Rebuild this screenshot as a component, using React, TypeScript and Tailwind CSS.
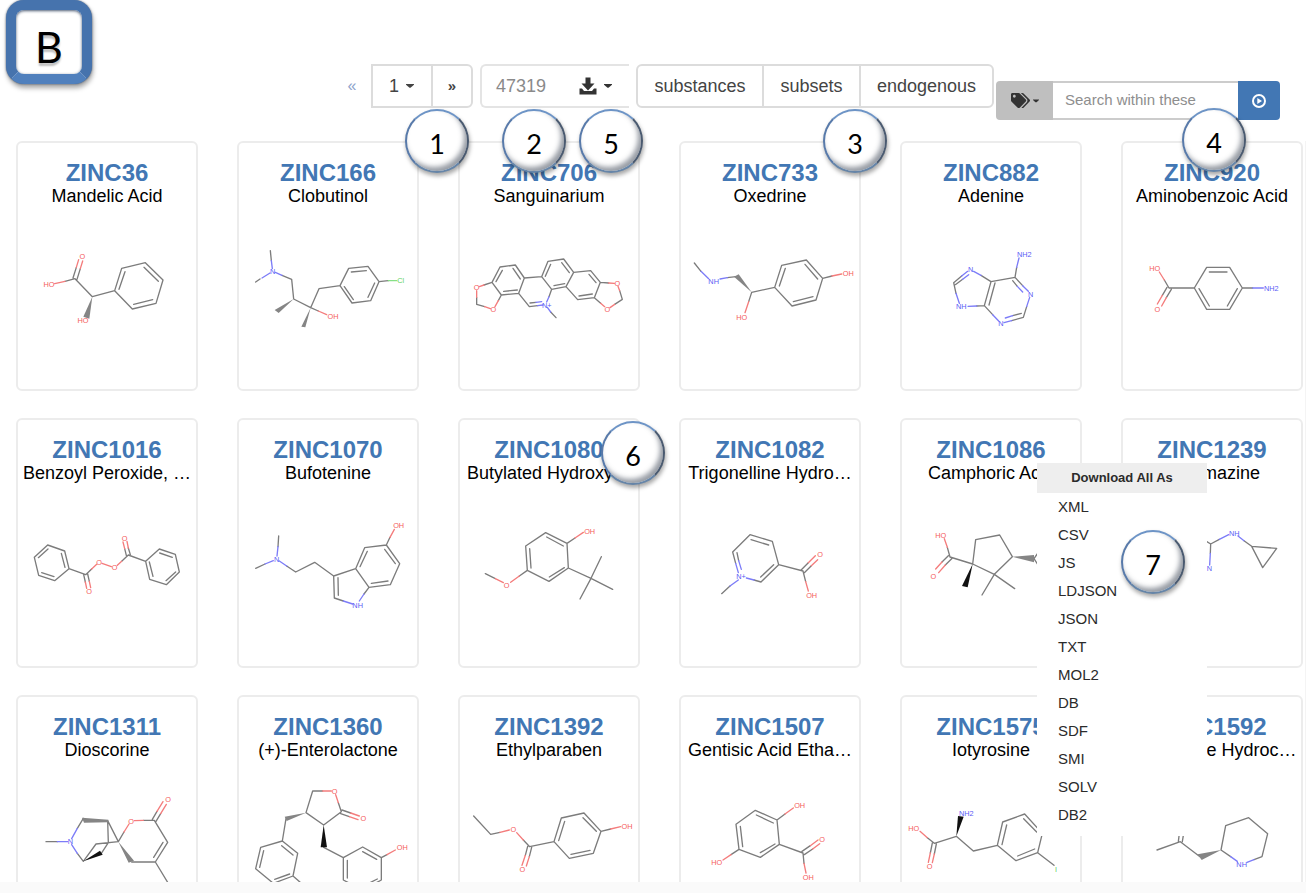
import type { ReactNode } from "react";
import { FaTags } from "react-icons/fa";

type Atom = [x: number, y: number, text: string, tone: "r" | "b" | "g"];

interface Molecule {
  origin: [number, number];
  carbon: string;
  oxygen?: string;
  nitrogen?: string;
  chlorine?: string;
  hashed?: string;
  wedge?: string;
  atoms: Atom[];
}

interface Compound {
  id: string;
  name: string;
  molecule: Molecule;
}

const toneFill = { r: "#f45b5b", b: "#5a5af5", g: "#5fd35f" };

const compounds: Compound[] = [
  {
    id: "ZINC36",
    name: "Mandelic Acid",
    molecule: {
      origin: [51, 6],
      carbon:
        "M195 154L225 146L277 200L344 182M344 182L365 115L436 98L489 150L468 220L397 237ZM357 178L375 125M432 112L475 154M458 209L401 223M219 144L229 112M231 148L241 116",
      oxygen: "M164 161L195 154M229 112L236 89M241 116L248 93",
      hashed: "M277 200L268 266L250 260Z",
      atoms: [[247, 80, "O", "r"], [147, 164, "HO", "r"], [249, 272, "HO", "r"]],
    },
  },
  {
    id: "ZINC166",
    name: "Clobutinol",
    molecule: {
      origin: [714, 6],
      carbon:
        "M811 62L814 92M780 147L767 156M846 136L875 148L881 207L932 233L957 176L1020 167M1020 167L1046 115L1104 109L1137 155L1112 212L1056 219ZM1054 126L1099 122M1124 159L1104 202M1033 170L1060 209M1137 155L1165 152M932 233L955 243",
      oxygen: "M955 243L980 254",
      nitrogen: "M814 92L817 116M810 129L786 144M826 127L846 136",
      chlorine: "M1165 152L1190 152",
      hashed: "M881 207L824 240L836 249ZM932 233L904 290L916 292Z",
      atoms: [[818, 124, "N", "b"], [999, 259, "OH", "r"], [1202, 152, "Cl", "g"]],
    },
  },
  {
    id: "ZINC706",
    name: "Sanguinarium",
    molecule: {
      origin: [57, 6],
      carbon:
        "M156 157L180 111L226 105L253 144L236 190L184 195ZM253 144L305 140L335 178L327 200M293 227L268 230L236 190M305 140L324 94L371 87L401 127L378 170L335 178M401 127L452 122L481 157L463 203L413 209L378 170M168 155L187 121M219 115L241 147M191 184L232 180M316 139L332 103M365 98L388 128M342 167L374 161M447 133L468 158M417 198L457 192M156 157L132 165M110 202L110 223L134 230M184 195L175 212M481 157L506 159M539 182L547 208L524 223M463 203L482 220M270 219L288 217M332 246L348 263",
      oxygen:
        "M132 165L118 170M110 182L110 202M134 230L151 236M175 212L165 230M506 159L523 160M534 169L539 182M524 223L510 233M482 220L494 230",
      nitrogen: "M327 200L320 216M309 225L293 227M288 217L305 215M322 232L332 246",
      atoms: [
        [110, 173, "O", "r"], [160, 239, "O", "r"], [532, 160, "O", "r"],
        [502, 238, "O", "r"], [320, 225, "N+", "b"],
      ],
    },
  },
  {
    id: "ZINC733",
    name: "Oxedrine",
    molecule: {
      origin: [720, 6],
      carbon:
        "M763 99L783 124M862 143L888 140M935 187L1004 172M1004 172L1025 106L1099 90L1148 145L1128 210L1056 228ZM1018 168L1036 115M1095 103L1133 147M1119 200L1060 215M1148 145L1176 138M935 187L926 215",
      oxygen: "M1176 138L1205 132M926 215L915 248",
      nitrogen: "M783 124L806 146M840 147L862 143",
      hashed: "M935 187L882 140L896 133Z",
      atoms: [[821, 153, "NH", "b"], [1225, 131, "OH", "r"], [905, 262, "HO", "r"]],
    },
  },
  {
    id: "ZINC882",
    name: "Adenine",
    molecule: {
      origin: [63, 6],
      carbon:
        "M303 136L333 155L313 227L290 228M345 159L327 225M333 155L405 142L410 112M245 138L221 158L228 190M248 148L226 164M405 142L428 167M398 152L412 169M440 230L430 262L395 272M424 250L398 257M313 227L338 254",
      nitrogen:
        "M281 124L303 136M263 124L245 138M266 134L248 148M228 190L238 220M264 229L290 228M410 112L417 84M428 167L445 184M412 169L428 186M449 202L440 230M395 272L372 278M398 257L376 264M338 254L356 273",
      atoms: [
        [272, 118, "N", "b"], [244, 230, "NH", "b"], [433, 72, "NH2", "b"],
        [452, 192, "N", "b"], [363, 281, "N", "b"],
      ],
    },
  },
  {
    id: "ZINC920",
    name: "Aminobenzoic Acid",
    molecule: {
      origin: [726, 6],
      carbon:
        "M853 150L867 174L943 174M943 174L980 112L1049 112L1087 174L1049 238L980 238ZM988 126L1041 126M1072 176L1042 228M957 176L988 228M1087 174L1118 174M861 172L847 196M874 178L859 203",
      oxygen: "M838 126L853 150M847 196L832 222M859 203L845 228",
      nitrogen: "M1118 174L1150 174",
      atoms: [[824, 114, "HO", "r"], [832, 238, "O", "r"], [1174, 174, "NH2", "b"]],
    },
  },
  {
    id: "ZINC1016",
    name: "Benzoyl Peroxide, …",
    molecule: {
      origin: [51, 27],
      carbon:
        "M103 172L143 135L194 153L207 206L164 242L116 226ZM115 173L144 147M184 160L195 202M162 230L125 218M207 206L257 224L275 207M251 224L256 246M263 222L268 244M365 184L385 165L437 184M379 166L374 146M391 164L385 144M437 184L478 147L526 163L538 216L499 254L449 238ZM479 159L517 172M527 216L498 242M448 186L459 229",
      oxygen:
        "M275 207L290 193M306 190L334 200M352 196L365 184M256 246L260 265M268 244L272 263M374 146L369 126M385 144L381 124",
      atoms: [
        [297, 187, "O", "r"], [344, 203, "O", "r"], [267, 275, "O", "r"], [374, 116, "O", "r"],
      ],
    },
  },
  {
    id: "ZINC1070",
    name: "Bufotenine",
    molecule: {
      origin: [714, 27],
      carbon:
        "M836 108L834 140M767 205L795 192M860 198L887 216L944 187L1001 228L1067 206L1107 262L1092 282M1001 228L1003 294L1030 303M1014 233L1015 286M1067 206L1094 143L1159 135L1199 191L1171 254L1107 262M1080 200L1102 154M1154 148L1186 191M1114 250L1164 243M1159 135L1170 112",
      oxygen: "M1170 112L1183 88",
      nitrogen: "M834 140L831 168M795 192L820 182M838 183L860 198M1092 282L1078 303M1030 303L1058 312",
      atoms: [[830, 178, "N", "b"], [1073, 315, "NH", "b"], [1196, 76, "OH", "r"]],
    },
  },
  {
    id: "ZINC1080",
    name: "Butylated Hydroxy…",
    molecule: {
      origin: [57, 27],
      carbon:
        "M257 138L317 98L381 130L385 204L327 244L262 211ZM269 146L273 204M320 111L370 138M373 203L328 231M381 130L405 114M262 211L238 228M166 236L136 221M385 204L453 235L484 170M518 268L453 235L420 297",
      oxygen: "M405 114L430 97M238 228L212 247M190 248L166 236",
      atoms: [[449, 93, "OH", "r"], [200, 255, "O", "r"]],
    },
  },
  {
    id: "ZINC1082",
    name: "Trigonelline Hydro…",
    molecule: {
      origin: [720, 27],
      carbon:
        "M887 190L878 156L930 104L997 124L1016 194L963 246L942 240M933 119L986 135M1001 194L962 231M891 158L896 182M870 258L845 281M1016 194L1089 213L1097 245M1084 209L1105 188M1093 218L1114 197",
      oxygen: "M1105 188L1126 167M1114 197L1133 179M1097 245L1105 273",
      nitrogen: "M887 190L895 218M896 182L904 208M895 240L870 258M919 234L942 240",
      atoms: [[903, 230, "N+", "b"], [1140, 162, "O", "r"], [1115, 285, "OH", "r"]],
    },
  },
  {
    id: "ZINC1086",
    name: "Camphoric Acid",
    molecule: {
      origin: [63, 297],
      carbon:
        "M202 412L210 441L278 462L287 389L359 375L397 440L343 493L278 462M343 493L306 555M343 493L404 536M205 437L186 456M215 446L196 465M480 420L462 446L480 474",
      oxygen: "M193 386L202 412M186 456L167 477M196 465L176 488",
      hashed: "M397 440L462 435L462 457Z",
      wedge: "M278 462L246 528L263 532Z",
      atoms: [[182, 377, "HO", "r"], [160, 500, "O", "r"]],
    },
  },
  {
    id: "ZINC1239",
    name: "Cyromazine",
    molecule: {
      origin: [726, 297],
      carbon: "M970 388L992 402L991 430M992 402L1018 388M1092 392L1115 409M1115 409L1190 415L1148 473Z",
      nitrogen: "M991 430L989 465M1018 388L1046 374M1074 378L1092 392",
      atoms: [[988, 475, "N", "b"], [1063, 371, "NH", "b"]],
    },
  },
  {
    id: "ZINC1311",
    name: "Dioscorine",
    molecule: {
      origin: [51, 288],
      carbon:
        "M138 455L172 455M232 415L250 385M323 392L355 455L288 462L250 514L232 490M323 392L325 458L304 490M355 455L372 426M430 391L463 391L503 457L466 516L395 516M489 457L461 502M466 516L503 577L520 606M457 388L471 364M468 394L482 371",
      oxygen: "M372 426L387 402M403 392L430 391M471 364L489 335M482 371L499 343",
      nitrogen: "M172 455L203 455M215 446L232 415M215 464L232 490",
      hashed: "M246 383L325 389L325 397L252 398ZM355 455L386 518L402 512Z",
      wedge: "M250 514L300 482L308 494Z",
      atoms: [[211, 455, "N", "b"], [393, 393, "O", "r"], [504, 327, "O", "r"]],
    },
  },
  {
    id: "ZINC1360",
    name: "(+)-Enterolactone",
    molecule: {
      origin: [714, 288],
      carbon:
        "M968 303L938 303L918 368L971 405L1024 365L1015 338M1026 360L1052 369M1022 371L1048 380M858 386L847 453L893 490L879 558L820 580L767 536L782 472L847 453M879 558L902 578M845 467L879 495M869 552L824 568M779 532L791 482M971 472L1030 503L1088 471L1144 503L1144 570L1088 600L1030 570L1030 503M1042 511L1042 564M1088 485L1130 508M1132 567L1090 588M1144 503L1161 494",
      oxygen: "M968 303L994 303M1007 314L1015 338M1052 369L1078 378M1048 380L1074 389M1161 494L1186 480",
      hashed: "M918 368L854 380L860 393Z",
      wedge: "M971 405L962 472L981 472Z",
      atoms: [[1004, 303, "O", "r"], [1090, 386, "O", "r"], [1207, 473, "OH", "r"]],
    },
  },
  {
    id: "ZINC1392",
    name: "Ethylparaben",
    molecule: {
      origin: [57, 288],
      carbon:
        "M101 378L152 433L180 427M250 450L269 470L342 455M342 455L364 384L432 369L483 424L460 490L388 505ZM356 452L374 394M429 383L469 424M450 481L393 493M263 469L256 496M275 472L268 500M483 424L512 417",
      oxygen: "M180 427L208 420M230 428L250 450M256 496L246 526M268 500L259 528M512 417L542 410",
      atoms: [[220, 417, "O", "r"], [247, 539, "O", "r"], [561, 408, "OH", "r"]],
    },
  },
  {
    id: "ZINC1507",
    name: "Gentisic Acid Etha…",
    molecule: {
      origin: [720, 288],
      carbon:
        "M888 403L946 361L1011 390L1018 463L961 502L897 478ZM901 409L908 470M949 375L1000 399M1005 462L961 488M1011 390L1035 372M897 478L873 494M1018 463L1089 489L1092 520M1086 484L1111 467M1093 494L1118 477",
      oxygen: "M1035 372L1060 354M873 494L849 510M1111 467L1134 450M1118 477L1139 461M1092 520L1098 549",
      atoms: [
        [1079, 347, "OH", "r"], [830, 517, "HO", "r"], [1146, 449, "O", "r"], [1105, 561, "OH", "r"],
      ],
    },
  },
  {
    id: "ZINC1575",
    name: "Iotyrosine",
    molecule: {
      origin: [63, 378],
      carbon:
        "M142 533L163 550L229 529L280 573L352 556M352 556L368 486L434 462L487 520L473 578L408 602ZM366 554L380 495M431 476L470 516M464 567L413 588M473 578L522 616M157 549L151 579M169 552L163 582",
      oxygen: "M120 514L142 533M151 579L145 607M163 582L157 608",
      wedge: "M229 529L234 468L251 470Z",
      atoms: [[101, 504, "HO", "r"], [149, 620, "O", "r"], [259, 459, "NH2", "b"], [528, 628, "I", "g"]],
    },
  },
  {
    id: "ZINC1592",
    name: "Pelletierine Hydroc…",
    molecule: {
      origin: [726, 378],
      carbon:
        "M831 570L901 545L960 590M895 545L898 520M907 545L911 520M1052 590L1023 570L1037 497L1106 473L1163 521L1146 590L1122 599",
      nitrogen: "M1052 590L1072 604M1122 599L1101 607",
      hashed: "M1023 570L953 583L965 600Z",
      atoms: [[1085, 613, "NH", "b"]],
    },
  },
];

const formats = ["XML", "CSV", "JS", "LDJSON", "JSON", "TXT", "MOL2", "DB", "SDF", "SMI", "SOLV", "DB2"];

function Structure({ molecule, label }: { molecule: Molecule; label: string }) {
  const { origin, carbon, oxygen, nitrogen, chlorine, hashed, wedge, atoms } = molecule;
  return (
    <svg
      role="img"
      aria-label={label}
      viewBox={`${origin[0]} ${origin[1]} 540 450`}
      className="h-[150px] w-full"
      fill="none"
      strokeWidth="4"
      strokeLinecap="round"
      strokeLinejoin="round"
    >
      <path d={carbon} stroke="#7c7c7c" />
      {oxygen && <path d={oxygen} stroke="#f47c7c" />}
      {nitrogen && <path d={nitrogen} stroke="#7c7cf8" />}
      {chlorine && <path d={chlorine} stroke="#86e086" />}
      {hashed && <path d={hashed} fill="#858585" />}
      {wedge && <path d={wedge} fill="#111111" />}
      {atoms.map(([x, y, text, tone]) => (
        <text
          key={`${x}-${y}`}
          x={x}
          y={y + 8}
          fill={toneFill[tone]}
          fontSize="22"
          textAnchor="middle"
          className="font-['Liberation_Sans',sans-serif]"
        >
          {text}
        </text>
      ))}
    </svg>
  );
}

function Marker({ place, children }: { place: string; children: ReactNode }) {
  return (
    <span
      className={`absolute z-20 flex size-16 items-center justify-center rounded-full border-2 border-t-[#6d94c6] border-r-[#4a5a70] border-b-[#6685a8] border-l-[#587aaa] bg-white pt-1 font-[Lato,sans-serif] text-[27px] leading-none text-black shadow-[inset_-3px_-4px_5px_rgba(50,60,75,0.5),1px_3px_4px_rgba(0,0,0,0.35)] ${place}`}
    >
      {children}
    </span>
  );
}

function Caret({ className }: { className: string }) {
  return (
    <svg viewBox="0 0 10 5" className={className} aria-hidden="true">
      <path d="M0 0H10V1L6 4.4Q5 5 4 4.4L0 1Z" fill="currentColor" />
    </svg>
  );
}

function DownloadIcon() {
  return (
    <svg viewBox="0 0 18 18" className="size-[18px]" aria-hidden="true" fill="currentColor">
      <path d="M6.5 0.5H11.5V6.5H15.5L9 13.5L2.5 6.5H6.5Z" />
      <path d="M0.5 11.5H3L5 14H13L15 11.5H17.5V17.5H0.5Z" />
    </svg>
  );
}

function GoIcon() {
  return (
    <svg viewBox="0 0 16 16" className="size-4" aria-hidden="true">
      <circle cx="8" cy="8" r="6" fill="none" stroke="white" strokeWidth="2" />
      <path d="M6.3 5L11 8L6.3 11Z" fill="white" />
    </svg>
  );
}

function DownloadMenu() {
  return (
    <div className="absolute top-[43px] left-[135px] z-10 w-[170px] bg-white pb-[7px] text-left text-[15px] text-[#2b2b2b]">
      <h2 className="h-[30px] bg-[#eeeeee] text-center text-[13px] leading-[30px] font-bold">Download All As</h2>
      <ul>
        {formats.map((format) => (
          <li key={format}>
            <a href={`#${format}`} className="block pl-[21px] leading-[28px]">
              {format}
            </a>
          </li>
        ))}
      </ul>
      <Marker place="top-[67px] left-[84px]">7</Marker>
    </div>
  );
}

function CompoundCard({ compound }: { compound: Compound }) {
  return (
    <article className="relative h-[250px] rounded-md border-2 border-[#ececec] text-center">
      <h3 className="mt-[17px] text-[24px] leading-[26px] font-bold whitespace-nowrap text-[#4277b4]">
        <a href={`#${compound.id}`}>{compound.id}</a>
      </h3>
      <p className="text-[18px] leading-5 whitespace-nowrap text-black">{compound.name}</p>
      <div className="-mx-px mt-[26px]">
        <Structure molecule={compound.molecule} label={`${compound.name} structure`} />
      </div>
      {compound.id === "ZINC1080" && <Marker place="top-[1px] left-[141px]">6</Marker>}
      {compound.id === "ZINC1086" && <DownloadMenu />}
    </article>
  );
}

function Toolbar() {
  return (
    <header className="flex items-start justify-end pt-16 pr-[26px] pb-[21px] text-[18px] text-[#444444]">
      <a href="#previous" aria-label="Previous page" className="flex h-11 w-[38px] items-center justify-center text-[16px] text-[#8da3cc]">
        «
      </a>
      <div className="relative mr-[7px] flex h-11 w-[102px] rounded-r-md border-2 border-[#dcdcdc]">
        <button type="button" className="flex w-[60px] items-center justify-center gap-[6px] border-r-2 border-[#dcdcdc]">
          1 <Caret className="h-1 w-[10px]" />
        </button>
        <button type="button" aria-label="Next page" className="flex-1 text-[15px] font-bold">
          »
        </button>
        <Marker place="top-[43px] left-[32px]">1</Marker>
      </div>
      <div className="relative mr-[7px] flex h-11 w-[149px] items-center rounded-l-md border-2 border-r-0 border-[#e4e4e4] pl-[14px]">
        <span className="text-[#8a8a8a]">47319</span>
        <button type="button" aria-label="Download" className="ml-[33px] flex items-center gap-[6px] text-[#333333]">
          <DownloadIcon />
          <Caret className="h-1 w-[10px]" />
        </button>
        <Marker place="top-[43px] left-[20px]">2</Marker>
        <Marker place="top-[43px] left-[97px]">5</Marker>
      </div>
      <nav className="relative mr-[2px] flex h-11 w-[358px] rounded-md border-2 border-[#dcdcdc]">
        <button type="button" className="w-[126px] border-r-2 border-[#dcdcdc]">substances</button>
        <button type="button" className="w-[97px] border-r-2 border-[#dcdcdc]">subsets</button>
        <button type="button" className="flex-1">endogenous</button>
        <Marker place="top-[43px] left-[185px]">3</Marker>
      </nav>
      <form className="relative mt-[17px] flex h-[39px] w-[284px]">
        <button
          type="button"
          aria-label="Search filters"
          className="flex w-[57px] items-center justify-center gap-[3px] rounded-l-sm bg-[#bfbfbf] text-[#333333]"
        >
          <FaTags className="size-[19px]" />
          <Caret className="h-1 w-[6px]" />
        </button>
        <input
          type="search"
          aria-label="Search within these"
          placeholder="Search within these"
          className="w-0 flex-1 border-y-2 border-[#cccccc] pl-3 text-[15px] outline-none placeholder:text-[#8e8e8e]"
        />
        <button type="button" aria-label="Search" className="flex w-[42px] items-center justify-center rounded-r-sm bg-[#4277b4]">
          <GoIcon />
        </button>
        <Marker place="top-[27px] left-[186px]">4</Marker>
      </form>
    </header>
  );
}

export default function App() {
  return (
    <div className="relative flex h-screen flex-col overflow-hidden bg-white font-['Liberation_Sans',Arial,sans-serif]">
      <div className="absolute top-0 left-[6px] flex h-[84px] w-[86px] items-center justify-center rounded-[18px] border-[10px] border-[#4673ad] border-b-[#5080bd] bg-white font-[Lato,sans-serif] text-[43px] leading-none text-black shadow-[inset_0_1px_3px_rgba(30,50,80,0.8),0_0_2px_rgba(30,50,80,0.8),1px_4px_5px_rgba(0,0,0,0.35)]">
        <span className="pt-2 [text-shadow:0_3px_2px_rgba(0,0,0,0.25)]">B</span>
      </div>
      <Toolbar />
      <main className="grid min-h-0 flex-1 auto-rows-[250px] grid-cols-6 gap-x-[39px] gap-y-[27px] overflow-hidden border-r border-[#f4f4f4] pr-[2px] pl-4">
        {compounds.map((compound) => (
          <CompoundCard key={compound.id} compound={compound} />
        ))}
      </main>
      <footer className="h-[11px] shrink-0 bg-[#fafafa]" />
    </div>
  );
}
